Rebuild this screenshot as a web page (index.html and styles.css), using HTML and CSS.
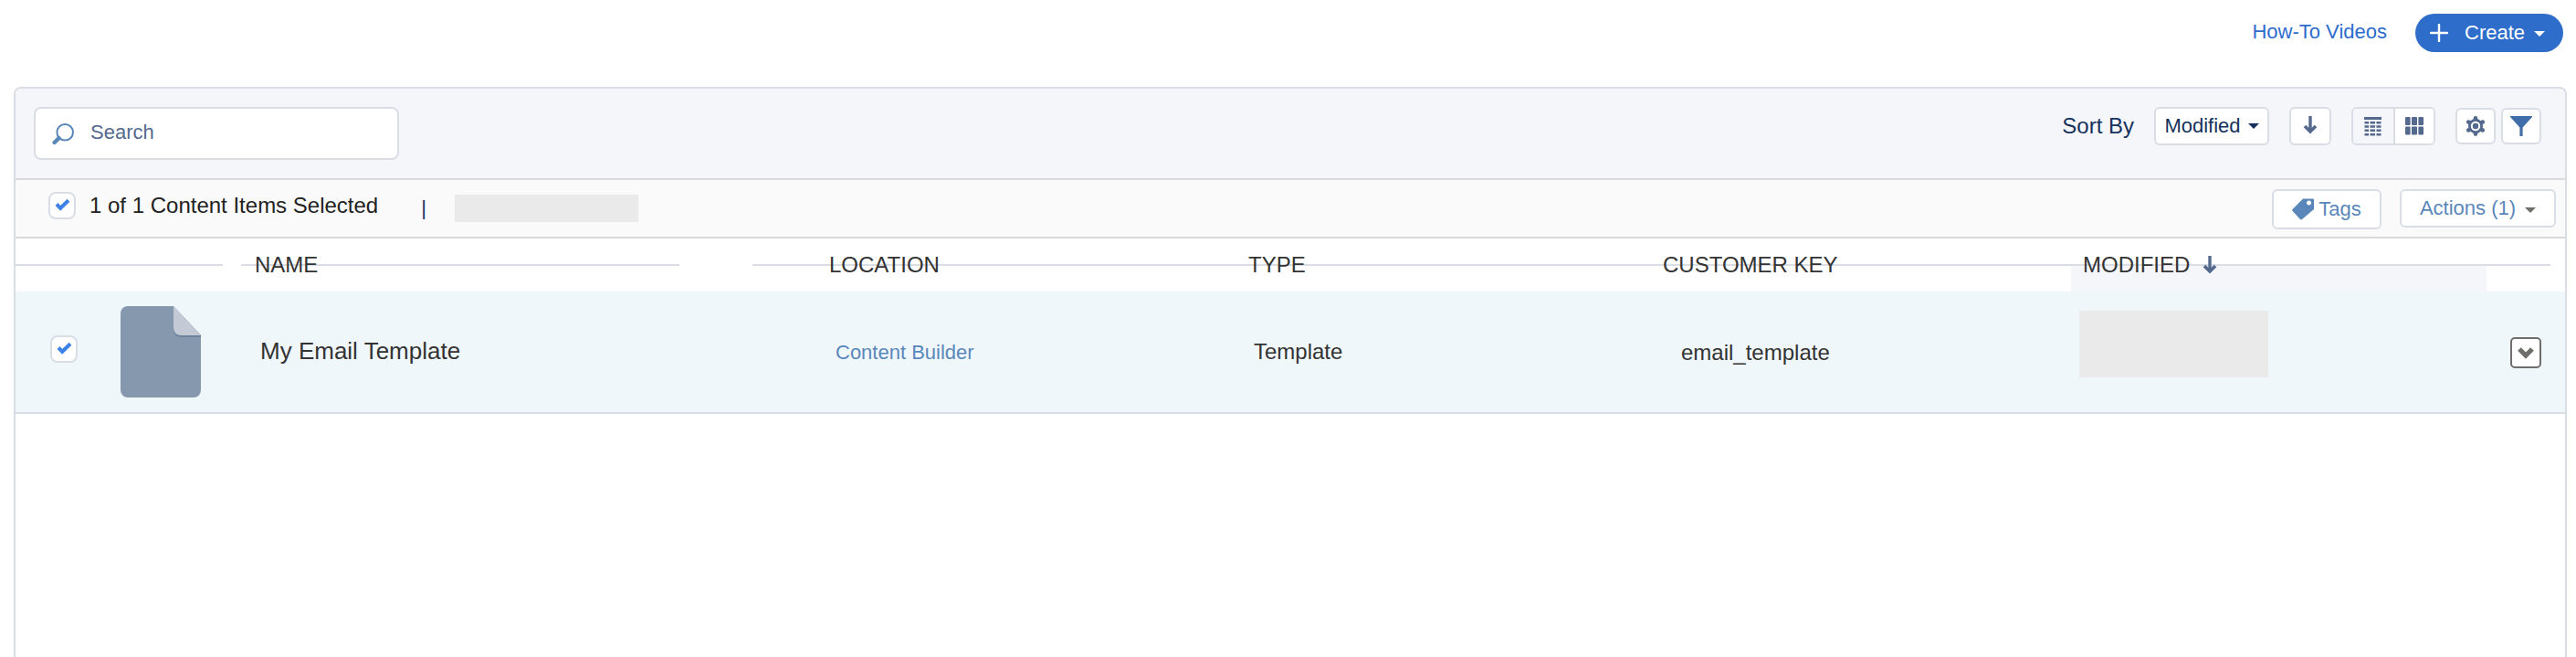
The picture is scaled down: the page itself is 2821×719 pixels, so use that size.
FILE: index.html
```html
<!DOCTYPE html>
<html lang="en">
<head>
<meta charset="utf-8">
<title>Content Builder</title>
<link rel="stylesheet" href="styles.css">
</head>
<body>
<header class="topbar">
  <a class="howto">How-To Videos</a>
  <button class="create">
    <svg class="plus" width="20" height="20" viewBox="0 0 20 20"><path d="M10 1v18M1 10h18" stroke="#fff" stroke-width="2.4" stroke-linecap="round"/></svg>
    <span>Create</span>
    <svg class="create-caret" width="12" height="6" viewBox="0 0 12 6"><path d="M0 0h12L6 6z" fill="#fff"/></svg>
  </button>
</header>
<main class="panel">
  <div class="toolbar">
    <div class="search">
      <svg width="26" height="26" viewBox="0 0 26 26" fill="none" stroke="#5a87ba"><circle cx="15.2" cy="10.7" r="8.8" stroke-width="2"/><path d="M8.600 17.200L3.600 22" stroke-width="4.400" stroke-linecap="round"/></svg>
      <span>Search</span>
    </div>
    <div class="tools">
      <span class="sort-label">Sort By</span>
      <button class="btn sort">Modified<svg width="12" height="6" viewBox="0 0 12 6"><path d="M0 0h12L6 6z" fill="#16325c"/></svg></button>
      <button class="btn direction"><svg width="16" height="20" viewBox="0 0 16 20" fill="none" stroke="#54698d"><path d="M8 0v16" stroke-width="3.400"/><path d="M2 11l6 6 6-6" stroke-width="3.600"/></svg></button>
      <div class="views">
        <button class="view active"><svg width="19" height="21" viewBox="0 0 19 21" fill="#54698d"><path d="M0 0h19v3H0zM.5 5h4.500v2.500H.5zM6.500 5h5.500v2.500H6.500zM13.500 5h5v2.500h-5zM.5 9.300h4.500v2.500H.5zM6.500 9.300h5.500v2.500H6.500zM13.500 9.300h5v2.500h-5zM.5 13.600h4.500v2.500H.5zM6.500 13.600h5.500v2.500H6.500zM13.500 13.600h5v2.500h-5zM.5 17.900h4.500v2.500H.5zM6.500 17.900h5.500v2.500H6.500zM13.500 17.900h5v2.500h-5z"/></svg></button>
        <button class="view"><svg width="20" height="20" viewBox="0 0 20 20" fill="#54698d"><rect width="5.600" height="9" rx="1"/><rect x="7" width="6" height="9" rx="1"/><rect x="14.400" width="5.600" height="9" rx="1"/><rect y="10.500" width="5.600" height="9" rx="1"/><rect x="7" y="10.500" width="6" height="9" rx="1"/><rect x="14.400" y="10.500" width="5.600" height="9" rx="1"/></svg></button>
      </div>
      <button class="btn square gear"><svg width="22" height="22" viewBox="0 0 22 22"><g stroke="#54698d" stroke-width="4.600" stroke-linecap="round"><path d="M11 2.400v17.200M3.200 6.600l15.600 8.800M3.200 15.400l15.600-8.800"/></g><circle cx="11" cy="11" r="8" fill="#54698d"/><circle cx="11" cy="11" r="4.200" fill="#54698d" stroke="#fff" stroke-width="2"/></svg></button>
      <button class="btn square"><svg width="24" height="22" viewBox="0 0 24 22"><path d="M0 0h24v1L13.600 12.500V22h-3.200v-9.500L0 1z" fill="#3f6eaa"/></svg></button>
    </div>
  </div>
  <div class="selection">
    <span class="check check-all"><svg width="17" height="14" viewBox="0 0 17 14"><path d="M2 6.500l4.200 4.300L15 2.200" fill="none" stroke="#3c82e6" stroke-width="4"/></svg></span>
    <span class="count">1 of 1 Content Items Selected</span>
    <span class="pipe">|</span>
    <span class="masked-name"></span>
    <div class="actions">
      <button class="btn tags"><svg width="24" height="24" viewBox="0 0 24 24"><path fill-rule="evenodd" d="M12 .5h11q1 0 1 1V12L11 23q-1 .8-2 0L.6 14q-.9-1 0-2zM18.500 2.500a2.500 2.500 0 1 0 .01 0z" fill="#5a87ba"/></svg>Tags</button>
      <button class="btn act">Actions (1)<svg width="12" height="6" viewBox="0 0 12 6"><path d="M0 0h12L6 6z" fill="#706e6b"/></svg></button>
    </div>
  </div>
  <div class="row head">
    <div class="col-icon th"></div>
    <div class="col-name th">NAME</div>
    <div class="col-loc th">LOCATION</div>
    <div class="col-type th">TYPE</div>
    <div class="col-key th">CUSTOMER KEY</div>
    <div class="col-mod th sorted">MODIFIED<svg width="16" height="20" viewBox="0 0 16 20" fill="none" stroke="#54698d"><path d="M8 0v16" stroke-width="3.400"/><path d="M2 11l6 6 6-6" stroke-width="3.600"/></svg></div>
    <div class="col-menu th"></div>
  </div>
  <div class="row item">
    <div class="col-icon">
      <span class="check"><svg width="17" height="14" viewBox="0 0 17 14"><path d="M2 6.500l4.200 4.300L15 2.200" fill="none" stroke="#3c82e6" stroke-width="4"/></svg></span>
      <svg class="file" width="88" height="100" viewBox="0 0 88 100"><path d="M8 0h50l30 32v60a8 8 0 0 1-8 8H8a8 8 0 0 1-8-8V8a8 8 0 0 1 8-8z" fill="#8698ae"/><path d="M58 1v24q0 9 9 9h21v-2z" fill="#6c829d"/><path d="M58 0v23q0 9 9 9h21z" fill="#c3c9d5"/></svg>
    </div>
    <div class="col-name title">My Email Template</div>
    <div class="col-loc"><a class="link">Content Builder</a></div>
    <div class="col-type"><span class="type">Template</span></div>
    <div class="col-key"><span class="key">email_template</span></div>
    <div class="col-mod"><span class="masked-date"></span></div>
    <div class="col-menu"><button class="menu"><svg width="18" height="14" viewBox="0 0 18 14"><path d="M2 3l7 7 7-7" fill="none" stroke="#706e6b" stroke-width="5.200"/></svg></button></div>
  </div>
</main>
</body>
</html>
```
FILE: styles.css
```css
* { box-sizing: border-box; }
body {
  margin: 0;
  height: 719px;
  overflow: hidden;
  background: #fff;
  font-family: "Liberation Sans", Arial, sans-serif;
  font-size: 24px;
  color: #333;
  display: flex;
  flex-direction: column;
}
svg { display: block; flex: none; }
button { font: inherit; margin: 0; padding: 0; }
span, a, button, .th, .title { white-space: nowrap; }

.topbar {
  height: 95px;
  flex: none;
  display: flex;
  justify-content: flex-end;
  align-items: flex-start;
  padding: 15px 14px 0 0;
}
.howto { font-size: 22px; line-height: 40px; color: #2e6dcc; margin-right: 31px; }
.create {
  display: flex;
  align-items: center;
  width: 162px;
  height: 42px;
  padding-left: 16px;
  border: 0;
  border-radius: 21px;
  background: #2f6dcb;
  color: #fff;
  font-size: 22px;
}
.plus { margin: -1px 18px 0 0; }
.create-caret { margin-left: 10px; margin-top: 2px; }

.panel {
  flex: 1 0 640px;
  margin: 0 10px 0 15px;
  border: 2px solid #d8dde6;
  border-bottom: 0;
  border-radius: 8px 8px 0 0;
  overflow: hidden;
}
.toolbar {
  height: 100px;
  padding: 20px 26px 0 20px;
  display: flex;
  justify-content: space-between;
  align-items: flex-start;
  background: #f4f6fa;
  border-bottom: 2px solid #d8dadc;
}
.search {
  width: 400px;
  height: 58px;
  padding-left: 17px;
  display: flex;
  align-items: center;
  gap: 17px;
  border: 2px solid #d8dde6;
  border-radius: 8px;
  background: #fff;
  color: #54698d;
  font-size: 22px;
}
.search svg { margin-top: 2px; }
.search span { line-height: 24px; margin-top: -2px; }
.tools { display: flex; align-items: center; height: 42px; color: #16325c; }
.btn {
  height: 42px;
  display: flex;
  align-items: center;
  justify-content: center;
  border: 2px solid #d8dde6;
  border-radius: 6px;
  background: #fff;
  font-size: 22px;
  color: #5a87ba;
}
.sort-label { margin-right: 22px; }
.sort { width: 126px; gap: 8px; color: #16325c; }
.direction { width: 46px; margin-left: 22px; padding-bottom: 2px; }
.views {
  width: 92px;
  height: 42px;
  margin: 0 22px;
  display: flex;
  border: 2px solid #d8dde6;
  border-radius: 6px;
  overflow: hidden;
  background: #fff;
}
.view {
  flex: 1;
  display: flex;
  align-items: center;
  justify-content: center;
  border: 0;
  background: #fff;
}
.view.active {
  flex: 0 0 46px;
  padding-right: 2px;
  background: #f4f6fa;
  border-right: 2px solid #d8dde6;
}
.square { width: 44px; height: 40px; }
.square svg { margin-top: -1px; }
.gear { margin-right: 6px; }

.selection {
  height: 64px;
  padding: 0 10px 0 36px;
  display: flex;
  align-items: flex-start;
  background: #fafafa;
  border-bottom: 2px solid #d8dadc;
  color: #222;
}
.check {
  width: 30px;
  height: 30px;
  flex: none;
  display: flex;
  justify-content: center;
  padding: 5px 0 0 1px;
  border: 2px solid #d8dde6;
  border-radius: 8px;
  background: #fff;
}
.check-all { margin-top: 13px; }
.count { margin: 13px 0 0 15px; line-height: 30px; }
.pipe { margin: 16px 0 0 47px; line-height: 30px; font-size: 22px; color: #16325c; }
.masked-name { width: 201px; height: 30px; margin: 16px 0 0 31px; background: #eaeaea; }
.actions { margin: 10px 0 0 auto; display: flex; align-items: flex-start; gap: 20px; }
.tags { width: 120px; height: 44px; gap: 5px; }
.act { width: 171px; gap: 10px; }
.act svg { margin-top: 3px; }

.row { display: flex; }
.col-icon { width: 227px; }
.col-name { width: 480px; margin-left: 20px; }
.col-loc { width: 451px; margin-left: 80px; }
.col-type { width: 457px; }
.col-key { width: 536px; }
.col-mod { width: 455px; }
.col-menu { width: 70px; }
.head { height: 58px; }
.th {
  line-height: 58px;
  background: linear-gradient(#d8dde6, #d8dde6) 0 28px / 100% 2px no-repeat;
}
.head .col-name { padding-left: 15px; }
.head .col-loc { padding-left: 84px; }
.head .col-type { padding-left: 92px; }
.head .col-key { padding-left: 89px; }
.head .sorted {
  padding-left: 13px;
  display: flex;
  align-items: center;
  gap: 14px;
  background:
    linear-gradient(#d8dde6, #d8dde6) 0 28px / 100% 2px no-repeat,
    linear-gradient(#f4f6fa, #f4f6fa) 0 30px / 100% 28px no-repeat;
}
.item { height: 134px; background: #f0f7fb; border-bottom: 2px solid #d8dde6; }
.item > div { display: flex; align-items: center; }
.item .col-icon { padding-left: 38px; }
.item .check { margin: -6px 47px 0 0; }
.item .title { padding: 0 0 2px 21px; font-size: 26px; }
.item .col-loc { padding-left: 91px; }
.link { font-size: 22px; color: #5a87ba; margin-top: 2px; }
.item .col-type { padding-left: 98px; }
.type { margin-top: -1px; }
.item .col-key { padding-left: 109px; }
.key { margin-top: 1px; }
.item .col-mod { padding-left: 9px; }
.masked-date { width: 207px; height: 73px; margin-top: -17px; background: #eaeaea; }
.item .col-menu { padding-left: 26px; }
.menu {
  width: 34px;
  height: 34px;
  flex: none;
  display: flex;
  align-items: center;
  justify-content: center;
  margin-top: 2px;
  border: 2px solid #706e6b;
  border-radius: 5px;
  background: #fff;
}
```
